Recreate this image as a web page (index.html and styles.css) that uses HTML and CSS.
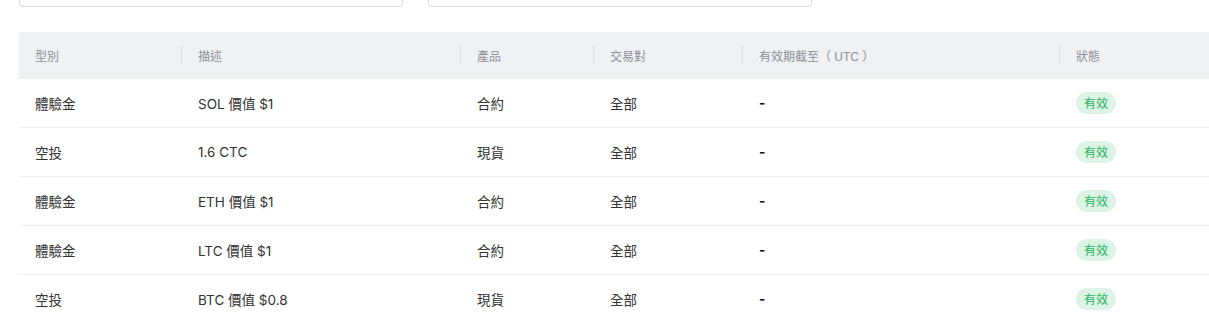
FILE: index.html
```html
<!DOCTYPE html>
<html lang="zh-Hant">
<head>
<meta charset="utf-8">
<link rel="stylesheet" href="styles.css">
</head>
<body>
<div class="page">
  <div class="filters">
    <div class="input"></div>
    <div class="input"></div>
  </div>
  <div class="table-wrap">
    <table class="table">
      <colgroup>
        <col class="c1"><col class="c2"><col class="c3"><col class="c4"><col class="c5"><col class="c6">
      </colgroup>
      <thead>
        <tr>
          <th>型別</th>
          <th class="sep">描述</th>
          <th class="sep">產品</th>
          <th class="sep">交易對</th>
          <th class="sep">有效期截至（ UTC ）</th>
          <th class="sep">狀態</th>
        </tr>
      </thead>
      <tbody>
        <tr><td>體驗金</td><td>SOL 價值 $1</td><td>合約</td><td>全部</td><td class="dash">-</td><td><span class="badge">有效</span></td></tr>
        <tr><td>空投</td><td>1.6 CTC</td><td>現貨</td><td>全部</td><td class="dash">-</td><td><span class="badge">有效</span></td></tr>
        <tr><td>體驗金</td><td>ETH 價值 $1</td><td>合約</td><td>全部</td><td class="dash">-</td><td><span class="badge">有效</span></td></tr>
        <tr><td>體驗金</td><td>LTC 價值 $1</td><td>合約</td><td>全部</td><td class="dash">-</td><td><span class="badge">有效</span></td></tr>
        <tr><td>空投</td><td>BTC 價值 $0.8</td><td>現貨</td><td>全部</td><td class="dash">-</td><td><span class="badge">有效</span></td></tr>
      </tbody>
    </table>
  </div>
</div>
</body>
</html>
```
FILE: styles.css
```css
html, body {
  margin: 0;
  padding: 0;
  background: #ffffff;
  overflow: hidden;
}
body {
  font-family: Inter, "Noto Sans CJK TC", sans-serif;
  color: #333333;
}
.page {
  padding-left: 19px;
}
.filters {
  display: flex;
  gap: 25px;
  margin-top: -29px;
  margin-bottom: 25px;
}
.input {
  width: 382px;
  height: 34px;
  border: 1px solid #dcdcdc;
  border-radius: 4px;
}
.table-wrap {
  width: 1190px;
  overflow: hidden;
}
.table {
  width: 1240px;
  table-layout: fixed;
  border-collapse: separate;
  border-spacing: 0;
}
.c1 { width: 162px; }
.c2 { width: 279px; }
.c3 { width: 133px; }
.c4 { width: 149px; }
.c5 { width: 317px; }
.c6 { width: 200px; }
thead th {
  position: relative;
  height: 47px;
  padding: 0 0 0 16px;
  background: #f0f1f3;
  text-align: left;
  font-family: "Liberation Sans", "Noto Sans CJK TC", sans-serif;
  font-size: 12px;
  font-weight: 400;
  color: #8d9099;
}
thead th.sep {
  padding-left: 17px;
}
thead th:first-child {
  border-top-left-radius: 4px;
}
thead th.sep::before {
  content: "";
  position: absolute;
  left: 0;
  top: 13px;
  width: 1px;
  height: 19px;
  background: #dddee1;
}
tbody td {
  height: 48px;
  padding: 0 0 0 16px;
  border-bottom: 1px solid #eeeeee;
  font-size: 13.5px;
  color: #333333;
  white-space: nowrap;
}
tbody td + td {
  padding-left: 17px;
}
td.dash {
  font-weight: 700;
  color: #111111;
}
.badge {
  display: inline-block;
  height: 22px;
  line-height: 22px;
  padding: 0 8px;
  border-radius: 11px;
  background: #dcf3e5;
  color: #27b35f;
  font-size: 12px;
  font-family: "Noto Sans CJK TC", sans-serif;
}
```
